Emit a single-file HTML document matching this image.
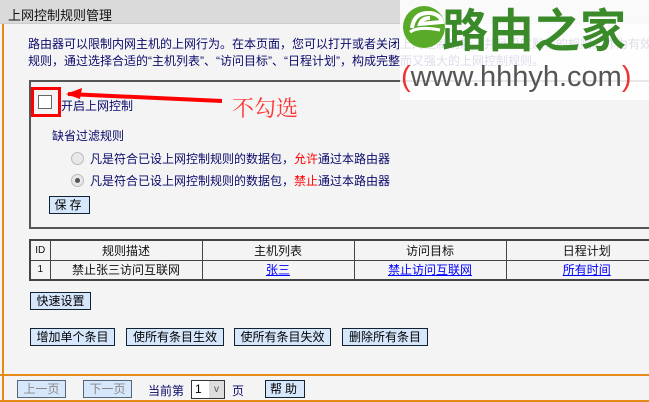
<!DOCTYPE html>
<html><head><meta charset="utf-8"><style>
*{margin:0;padding:0;box-sizing:border-box}
body{width:649px;height:402px;overflow:hidden;background:#f4f4f4;font-family:"Liberation Sans","Noto Sans CJK SC",sans-serif;font-size:12px;color:#0a0a6a;position:relative}
.a{position:absolute;white-space:nowrap}
.btn{position:absolute;background:#d6e6fb;border:1px solid #123;color:#000;font-size:12px;text-align:center;line-height:16px}
.dis{color:#888;border-color:#567}
td{border:1px solid #444;text-align:center;height:20px;font-size:12px;color:#111}
a{color:#00f;text-decoration:underline}
</style></head><body>
<div class="a" style="left:0;top:0;width:649px;height:24px;background:#dadada;border-bottom:1px solid #ccc"></div>
<div class="a" style="left:2px;top:24px;width:2px;height:376px;background:#e88a1a"></div>
<div class="a" style="left:8px;top:5px;font-size:13px;color:#111">上网控制规则管理</div>
<div class="a" style="left:28px;top:36px;line-height:17px;width:621px;overflow:hidden">路由器可以限制内网主机的上网行为。在本页面，您可以打开或者关闭上网控制功能，并且设定默认的规则。作为有效的补充<br>规则，通过选择合适的“主机列表”、“访问目标”、“日程计划”，构成完整而又强大的上网控制规则。</div>
<div class="a" style="left:29px;top:80px;width:640px;height:149px;border:2px solid #555;border-right:none"></div>
<div class="a" style="left:31px;top:87px;width:30px;height:30px;border:3px solid #f00"></div>
<div class="a" style="left:38px;top:95px;width:14px;height:14px;border:1px solid #666;background:#fff"></div>
<div class="a" style="left:61px;top:97px">开启上网控制</div>
<svg class="a" style="left:60px;top:88px" width="170" height="20"><path d="M8 6 L162 13" stroke="#f00" stroke-width="4"/><path d="M6 6 L22 0 L20 11 Z" fill="#f00"/></svg>
<div class="a" style="left:232px;top:92px;font-size:22px;color:#f33;font-family:'Noto Serif CJK SC',serif">不勾选</div>
<div class="a" style="left:52px;top:127px">缺省过滤规则</div>
<div class="a" style="left:71px;top:152px;width:13px;height:13px;border-radius:50%;border:1px solid #bbb;background:#e8e8e8"></div>
<div class="a" style="left:90px;top:150px">凡是符合已设上网控制规则的数据包，<span style="color:#f00">允许</span>通过本路由器</div>
<div class="a" style="left:71px;top:174px;width:13px;height:13px;border-radius:50%;border:1px solid #bbb;background:#e8e8e8"><div style="margin:3px;width:5px;height:5px;border-radius:50%;background:#555"></div></div>
<div class="a" style="left:90px;top:172px">凡是符合已设上网控制规则的数据包，<span style="color:#f00">禁止</span>通过本路由器</div>
<div class="btn" style="left:49px;top:196px;width:41px;height:18px;letter-spacing:3px">保存</div>
<table class="a" style="left:29px;top:239px;width:640px;border-collapse:collapse;border:2px solid #444">
<tr><td style="width:20px;font-size:10px">ID</td><td style="width:152px">规则描述</td><td style="width:152px">主机列表</td><td style="width:152px">访问目标</td><td>日程计划</td></tr>
<tr><td style="font-size:10px">1</td><td>禁止张三访问互联网</td><td><a>张三</a></td><td><a>禁止访问互联网</a></td><td><a>所有时间</a></td></tr>
</table>
<div class="btn" style="left:30px;top:292px;width:61px;height:18px">快速设置</div>
<div class="btn" style="left:30px;top:328px;width:85px;height:18px">增加单个条目</div>
<div class="btn" style="left:126px;top:328px;width:98px;height:18px">使所有条目生效</div>
<div class="btn" style="left:234px;top:328px;width:97px;height:18px">使所有条目失效</div>
<div class="btn" style="left:342px;top:328px;width:86px;height:18px">删除所有条目</div>
<div class="a" style="left:0;top:374px;width:649px;height:2px;background:#e88a1a"></div>
<div class="a" style="left:0;top:400px;width:649px;height:2px;background:#e88a1a"></div>
<div class="btn dis" style="left:17px;top:380px;width:49px;height:18px">上一页</div>
<div class="btn dis" style="left:83px;top:380px;width:49px;height:18px">下一页</div>
<div class="a" style="left:148px;top:382px">当前第</div>
<div class="a" style="left:191px;top:380px;width:34px;height:19px;border:1px solid #333;background:#fff;color:#000;padding-left:3px;line-height:17px">1<span style="position:absolute;right:0;top:0;width:15px;height:17px;background:#ddd;color:#555;text-align:center;font-size:10px">v</span></div>
<div class="a" style="left:232px;top:382px">页</div>
<div class="btn" style="left:265px;top:380px;width:40px;height:18px;letter-spacing:3px">帮助</div>
<div class="a" style="left:400px;top:0;width:249px;height:100px;background:rgba(255,255,255,0.86)"></div>
<svg class="a" style="left:400px;top:4px" width="48" height="46"><circle cx="24" cy="23" r="21" fill="#5aaa2a"/><path d="M12 24 Q14 8 30 9 Q40 10 42 18 L20 20 Q22 14 30 14" stroke="#fff" stroke-width="4" fill="none"/><path d="M10 28 Q18 22 40 26" stroke="#fff" stroke-width="3" fill="none"/></svg>
<div class="a" style="left:442px;top:6px;font-size:46px;line-height:50px;color:#3a8a2a;font-weight:bold">路由之家</div>
<div class="a" style="left:401px;top:59px;font-size:29px;line-height:36px;color:#555">
<span style="color:#e33">(</span>www.hhhyh.com<span style="color:#e33">)</span></div>
</body></html>
